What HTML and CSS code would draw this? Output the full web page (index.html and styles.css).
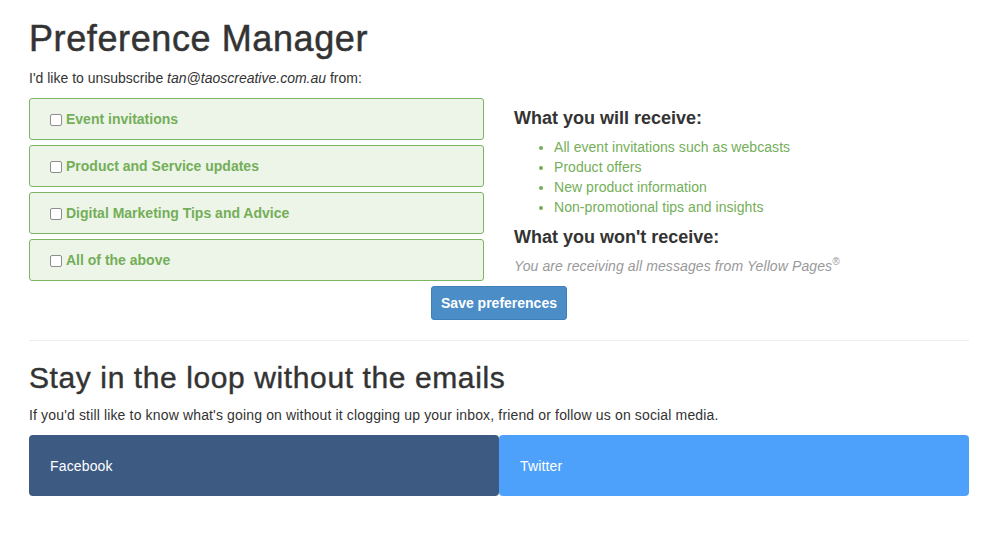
FILE: index.html
```html
<!DOCTYPE html>
<html>
<head>
<meta charset="utf-8">
<link rel="stylesheet" href="styles.css">
</head>
<body>
<div class="container">
  <h1 class="title">Preference Manager</h1>
  <p class="intro">I'd like to unsubscribe <em>tan@taoscreative.com.au</em> from:</p>
  <div class="row">
    <div class="col">
      <label class="option"><input type="checkbox" class="check"><span>Event invitations</span></label>
      <label class="option"><input type="checkbox" class="check"><span>Product and Service updates</span></label>
      <label class="option"><input type="checkbox" class="check"><span>Digital Marketing Tips and Advice</span></label>
      <label class="option"><input type="checkbox" class="check"><span>All of the above</span></label>
    </div>
    <div class="col summary">
      <h4 class="sub">What you will receive:</h4>
      <ul class="receive">
        <li>All event invitations such as webcasts</li>
        <li>Product offers</li>
        <li>New product information</li>
        <li>Non-promotional tips and insights</li>
      </ul>
      <h4 class="sub">What you won't receive:</h4>
      <p class="muted"><em>You are receiving all messages from Yellow Pages<sup>®</sup></em></p>
    </div>
  </div>
  <div class="actions">
    <button class="btn-save">Save preferences</button>
  </div>
  <hr class="divider">
  <h2 class="loop">Stay in the loop without the emails</h2>
  <p class="loop-text">If you'd still like to know what's going on without it clogging up your inbox, friend or follow us on social media.</p>
  <div class="social">
    <a class="social-btn facebook">Facebook</a>
    <a class="social-btn twitter">Twitter</a>
  </div>
</div>
</body>
</html>
```
FILE: styles.css
```css
* { box-sizing: border-box; }
html, body { margin: 0; padding: 0; background: #fff; }
body {
  font-family: "Liberation Sans", Arial, sans-serif;
  font-size: 14px;
  line-height: 20px;
  color: #333;
  letter-spacing: 0.15px;
}
.container {
  width: 940px;
  margin-left: 29px;
}
.title {
  font-size: 36px;
  font-weight: normal;
  line-height: 40px;
  margin: 19px 0 0;
  letter-spacing: 0.6px;
  -webkit-text-stroke: 0.5px #333;
}
.intro {
  margin: 9px 0 10px;
  letter-spacing: 0;
}
.row {
  display: flex;
  gap: 30px;
}
.col {
  flex: 1 1 0;
  display: flex;
  flex-direction: column;
  gap: 5px;
}
.option {
  display: flex;
  align-items: center;
  height: 42px;
  padding-left: 21px;
  border: 1px solid #7cb562;
  border-radius: 3px;
  background: #edf5e9;
  color: #74ae58;
  font-weight: bold;
  letter-spacing: 0;
  cursor: pointer;
}
.check {
  appearance: none;
  -webkit-appearance: none;
  width: 12px;
  height: 12px;
  margin: 1px 4px 0 -1px;
  border: 1px solid #8d8d8d;
  border-radius: 2px;
  background: #fff;
}
.summary {
  display: block;
  padding-top: 10px;
}
.sub {
  font-size: 18px;
  font-weight: bold;
  line-height: 20px;
  margin: 0 0 9px;
  letter-spacing: 0;
}
.receive {
  margin: 0 0 10px;
  padding-left: 40px;
  color: #74ae58;
  letter-spacing: 0.05px;
}
.receive li { line-height: 20px; }
.muted {
  margin: 0;
  color: #999;
  letter-spacing: 0.1px;
}
.muted sup {
  font-size: 10px;
  line-height: 0;
  vertical-align: 6px;
}
.actions {
  display: flex;
  justify-content: center;
  margin-top: 5px;
}
.btn-save {
  font-family: inherit;
  font-size: 14px;
  font-weight: bold;
  letter-spacing: 0;
  color: #fff;
  background: #4b8dc7;
  border: 1px solid #3f80b9;
  border-radius: 3px;
  height: 34px;
  padding: 0 9px;
}
.divider {
  border: 0;
  border-top: 1px solid #eee;
  margin: 20px 0 0;
}
.loop {
  font-size: 30px;
  font-weight: normal;
  line-height: 33px;
  margin: 20px 0 0;
  letter-spacing: 0.6px;
  -webkit-text-stroke: 0.4px #333;
}
.loop-text {
  margin: 11px 0 0;
}
.social {
  display: flex;
  margin-top: 10px;
}
.social-btn {
  flex: 1 1 0;
  height: 61px;
  display: flex;
  align-items: center;
  padding-left: 21px;
  color: #fff;
  border-radius: 4px;
  font-size: 14px;
}
.facebook { background: #3d5a83; }
.twitter { background: #4ea1fa; }
```
